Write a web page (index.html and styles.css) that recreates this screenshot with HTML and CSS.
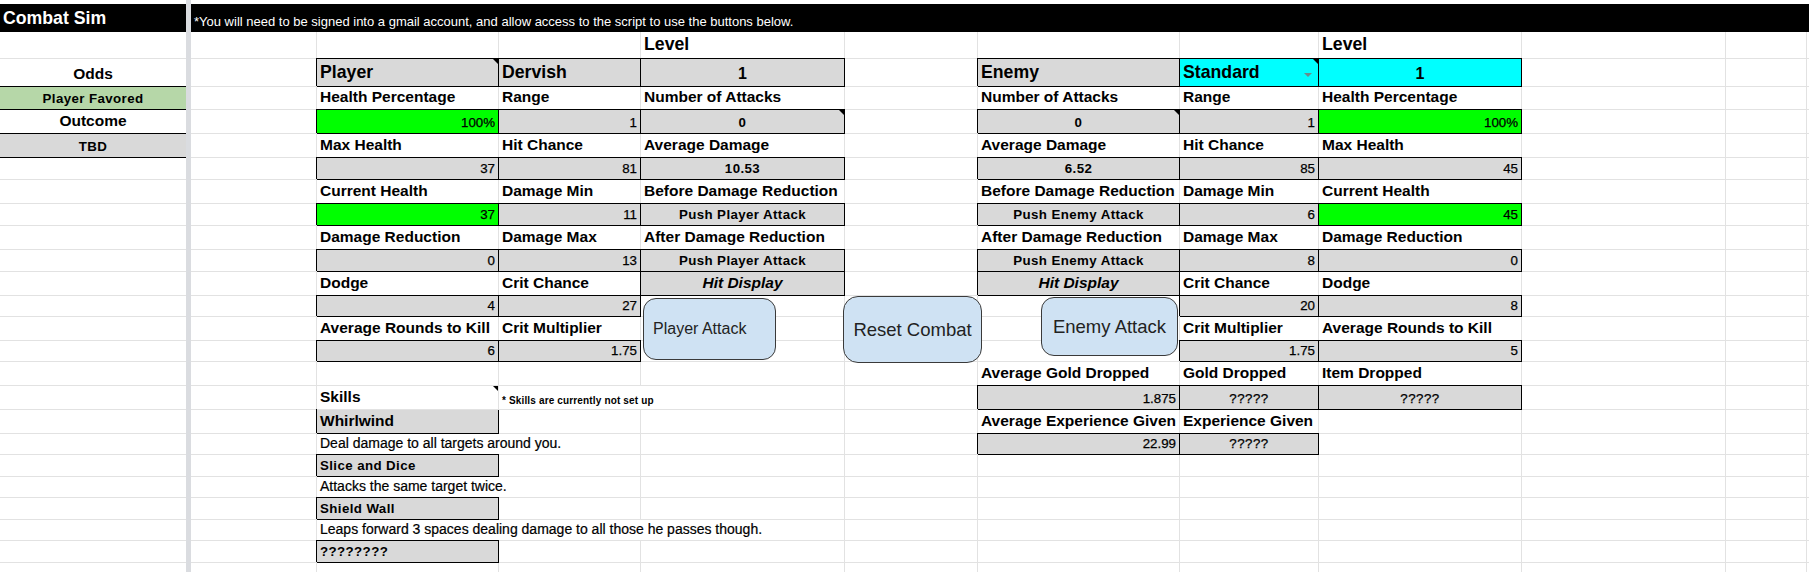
FILE: index.html
```html
<!DOCTYPE html>
<html lang="en">
<head>
<meta charset="utf-8">
<title>Combat Sim</title>
<link rel="stylesheet" href="styles.css">
</head>
<body>
<div class="wrap">
  <div class="sheet">
    <i class="divider"></i>
    <!-- r0 -->
    <i class="top a"></i><i class="top rest"></i>
    <!-- r1 header -->
    <span class="hd a hh">Combat Sim</span><span class="hd rest msg">*You will need to be signed into a gmail account, and allow access to the script to use the buttons below.</span>
    <!-- r2 -->
    <i class="a"></i><i></i><i></i><i></i><span class="hh">Level</span><i></i><i></i><i></i><span class="hh">Level</span><i></i><i></i><i></i>
    <!-- r3 -->
    <span class="a lb c">Odds</span><i></i><span class="hh g bx nt">Player</span><span class="hh g bx">Dervish</span><span class="lv g bx c">1</span><i></i><span class="hh g bx">Enemy</span><span class="hh cy bx nt dd">Standard</span><span class="lv cy bx c">1</span><i></i><i></i><i></i>
    <!-- r4 -->
    <span class="a sb lg bx c">Player Favored</span><i></i><span class="lb">Health Percentage</span><span class="lb">Range</span><span class="lb">Number of Attacks</span><i></i><span class="lb">Number of Attacks</span><span class="lb">Range</span><span class="lb">Health Percentage</span><i></i><i></i><i></i>
    <!-- r5 -->
    <span class="a lb c">Outcome</span><i></i><span class="v r gr bx">100%</span><span class="v r g bx">1</span><span class="sb c g bx nt">0</span><i></i><span class="sb c g bx nt">0</span><span class="v r g bx">1</span><span class="v r gr bx">100%</span><i></i><i></i><i></i>
    <!-- r6 -->
    <span class="a sb g bx c">TBD</span><i></i><span class="lb">Max Health</span><span class="lb">Hit Chance</span><span class="lb">Average Damage</span><i></i><span class="lb">Average Damage</span><span class="lb">Hit Chance</span><span class="lb">Max Health</span><i></i><i></i><i></i>
    <!-- r7 -->
    <i class="a"></i><i></i><span class="v r g bx">37</span><span class="v r g bx">81</span><span class="sb c g bx">10.53</span><i></i><span class="sb c g bx">6.52</span><span class="v r g bx">85</span><span class="v r g bx">45</span><i></i><i></i><i></i>
    <!-- r8 -->
    <i class="a"></i><i></i><span class="lb">Current Health</span><span class="lb">Damage Min</span><span class="lb">Before Damage Reduction</span><i></i><span class="lb">Before Damage Reduction</span><span class="lb">Damage Min</span><span class="lb">Current Health</span><i></i><i></i><i></i>
    <!-- r9 -->
    <i class="a"></i><i></i><span class="v r gr bx">37</span><span class="v r g bx">11</span><span class="sb c g bx">Push Player Attack</span><i></i><span class="sb c g bx">Push Enemy Attack</span><span class="v r g bx">6</span><span class="v r gr bx">45</span><i></i><i></i><i></i>
    <!-- r10 -->
    <i class="a"></i><i></i><span class="lb">Damage Reduction</span><span class="lb">Damage Max</span><span class="lb">After Damage Reduction</span><i></i><span class="lb">After Damage Reduction</span><span class="lb">Damage Max</span><span class="lb">Damage Reduction</span><i></i><i></i><i></i>
    <!-- r11 -->
    <i class="a"></i><i></i><span class="v r g bx">0</span><span class="v r g bx">13</span><span class="sb c g bx">Push Player Attack</span><i></i><span class="sb c g bx">Push Enemy Attack</span><span class="v r g bx">8</span><span class="v r g bx">0</span><i></i><i></i><i></i>
    <!-- r12 -->
    <i class="a"></i><i></i><span class="lb">Dodge</span><span class="lb">Crit Chance</span><span class="lb it c g bx">Hit Display</span><i></i><span class="lb it c g bx">Hit Display</span><span class="lb">Crit Chance</span><span class="lb">Dodge</span><i></i><i></i><i></i>
    <!-- r13 -->
    <i class="a"></i><i></i><span class="v r g bx">4</span><span class="v r g bx">27</span><i></i><i></i><i></i><span class="v r g bx">20</span><span class="v r g bx">8</span><i></i><i></i><i></i>
    <!-- r14 -->
    <i class="a"></i><i></i><span class="lb">Average Rounds to Kill</span><span class="lb">Crit Multiplier</span><i></i><i></i><i></i><span class="lb">Crit Multiplier</span><span class="lb">Average Rounds to Kill</span><i></i><i></i><i></i>
    <!-- r15 -->
    <i class="a"></i><i></i><span class="v r g bx">6</span><span class="v r g bx">1.75</span><i></i><i></i><i></i><span class="v r g bx">1.75</span><span class="v r g bx">5</span><i></i><i></i><i></i>
    <!-- r16 -->
    <i class="a"></i><i></i><i></i><i></i><i></i><i></i><span class="lb">Average Gold Dropped</span><span class="lb">Gold Dropped</span><span class="lb">Item Dropped</span><i></i><i></i><i></i>
    <!-- r17 -->
    <i class="a"></i><i></i><span class="lb nt">Skills</span><span class="tn s2">* Skills are currently not set up</span><i></i><span class="v r g bx">1.875</span><span class="q c g bx">?????</span><span class="q c g bx">?????</span><i></i><i></i><i></i>
    <!-- r18 -->
    <i class="a"></i><i></i><span class="lb g bx">Whirlwind</span><i></i><i></i><i></i><span class="lb">Average Experience Given</span><span class="lb">Experience Given</span><i></i><i></i><i></i><i></i>
    <!-- r19 -->
    <i class="a"></i><i></i><span class="ds s2">Deal damage to all targets around you.</span><i></i><i></i><span class="v r g bx">22.99</span><span class="q c g bx">?????</span><i></i><i></i><i></i><i></i>
    <!-- r20 -->
    <i class="a"></i><i></i><span class="sb g bx">Slice and Dice</span><i></i><i></i><i></i><i></i><i></i><i></i><i></i><i></i><i></i>
    <!-- r21 -->
    <i class="a"></i><i></i><span class="ds s2">Attacks the same target twice.</span><i></i><i></i><i></i><i></i><i></i><i></i><i></i><i></i>
    <!-- r22 -->
    <i class="a"></i><i></i><span class="sb g bx">Shield Wall</span><i></i><i></i><i></i><i></i><i></i><i></i><i></i><i></i><i></i>
    <!-- r23 -->
    <i class="a"></i><i></i><span class="ds s3">Leaps forward 3 spaces dealing damage to all those he passes though.</span><i></i><i></i><i></i><i></i><i></i><i></i><i></i>
    <!-- r24 -->
    <i class="a"></i><i></i><span class="sb g bx">????????</span><i></i><i></i><i></i><i></i><i></i><i></i><i></i><i></i><i></i>
    <!-- r25 -->
    <i class="a"></i><i></i><i></i><i></i><i></i><i></i><i></i><i></i><i></i><i></i><i></i><i></i>
  </div>
  <div class="btn b-player" role="button">Player Attack</div>
  <div class="btn b-reset" role="button">Reset Combat</div>
  <div class="btn b-enemy" role="button">Enemy Attack</div>
</div>
</body>
</html>
```

FILE: styles.css
```css
* { box-sizing: border-box; }
html, body { margin: 0; padding: 0; background: #fff; }
body {
  font-family: "Liberation Sans", Arial, sans-serif;
  color: #000;
  width: 1809px;
  height: 572px;
  overflow: hidden;
}
.wrap { position: relative; width: 1809px; height: 572px; overflow: hidden; }

.sheet {
  display: grid;
  grid-template-columns: 186px 5px 126px 182px 142px 204px 133px 202px 139px 203px 204px 81px 2px;
  grid-template-rows: 4px 28px 27px 28px 23px 24px 24px 22px 24px 22px 24px 22px 24px 21px 24px 21px 24px 24px 24px 21px 22px 21px 22px 21px 22px 30px;
}
.sheet > * {
  display: flex;
  align-items: flex-end;
  padding: 0 3px 3px;
  border-right: 1px solid #e2e2e2;
  border-bottom: 1px solid #e2e2e2;
  white-space: nowrap;
  overflow: hidden;
  min-width: 0;
  font-style: normal;
  line-height: normal;
}
.sheet > .divider { grid-column: 2; grid-row: 1 / -1; background: #dadce0; border: 0; padding: 0; }
.sheet > .a { border-right: 0; }
.sheet > .top { border: 0; padding: 0; }
.sheet > .rest { grid-column: 3 / -1; }
.sheet > .hd { background: #000; color: #fff; border: 0; }
.sheet > .s2 { grid-column: span 2; }
.sheet > .s3 { grid-column: span 3; }

.sheet > .bx {
  border-right-color: #000;
  border-bottom-color: #000;
  box-shadow: -1px -1px 0 #000, 0 -1px 0 #000;
}

.c { justify-content: center; }
.r { justify-content: flex-end; }

.msg { font-size: 13px; }
.hh { font-weight: 700; font-size: 17.7px; }
.lb { font-weight: 700; font-size: 15.5px; }
.lv { font-weight: 700; font-size: 16px; }
.v { font-size: 13.3px; -webkit-text-stroke: 0.25px #000; }
.sb { font-weight: 700; font-size: 13.3px; letter-spacing: 0.4px; }
.q { font-size: 13.3px; letter-spacing: 0.5px; -webkit-text-stroke: 0.25px #000; }
.it { font-style: italic !important; }
.ds { font-size: 14px; -webkit-text-stroke: 0.2px #000; }
.tn { font-size: 10px; font-weight: 700; letter-spacing: 0.15px; }

.g { background: #d9d9d9; }
.gr { background: #00ff00; }
.cy { background: #00ffff; }
.lg { background: #b6d7a8; }

.nt { position: relative; }
.nt::after {
  content: "";
  position: absolute;
  top: 0;
  right: 0;
  border-top: 5px solid #000;
  border-left: 5px solid transparent;
}
.dd::before {
  content: "";
  position: absolute;
  right: 6px;
  bottom: 9px;
  border-top: 4px solid #6a8c8c;
  border-left: 4px solid transparent;
  border-right: 4px solid transparent;
}

.btn {
  position: absolute;
  display: flex;
  align-items: center;
  background: #cfe2f3;
  border: 1px solid #3a3a3a;
  border-radius: 13px;
  color: #222;
  white-space: nowrap;
}
.b-player { left: 643px; top: 298px; width: 133px; height: 62px; font-size: 16px; padding-left: 9px; }
.b-reset { left: 843px; top: 296px; width: 139px; height: 67px; font-size: 18.5px; justify-content: center; border-radius: 15px; }
.b-enemy { left: 1041px; top: 297px; width: 137px; height: 59px; font-size: 18.5px; justify-content: center; }
```
